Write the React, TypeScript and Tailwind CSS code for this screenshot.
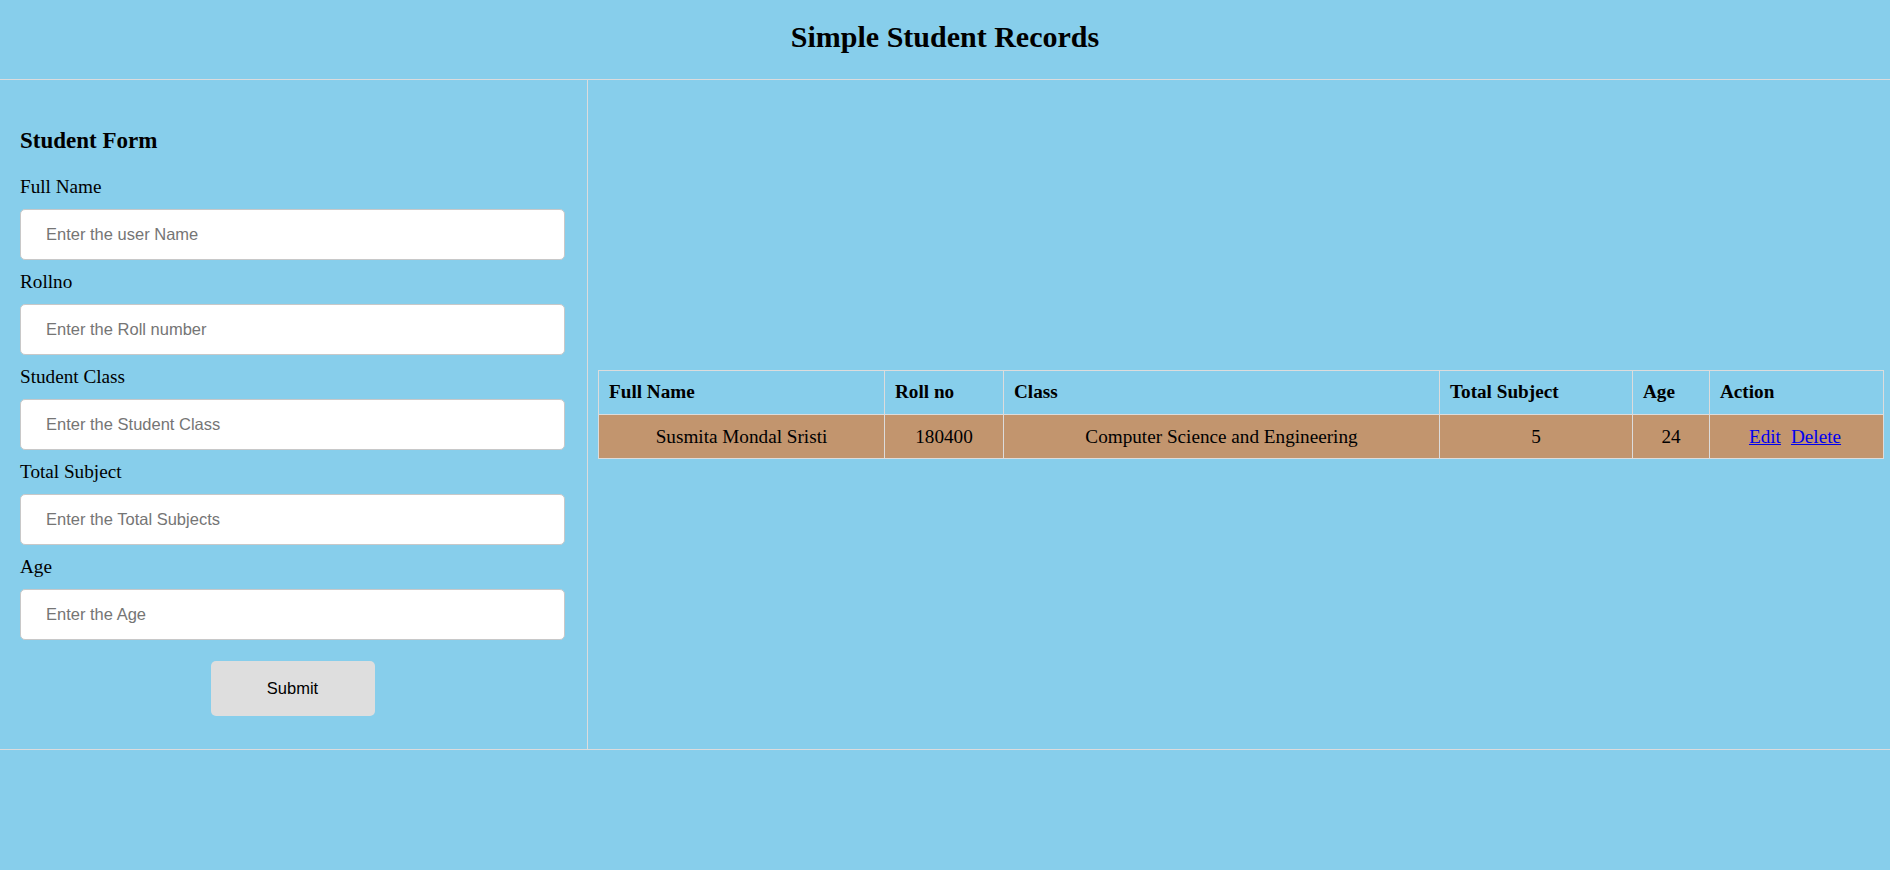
import React from "react";

const serif = { fontFamily: '"Liberation Serif", "Times New Roman", serif' };
const sans = { fontFamily: '"Liberation Sans", Arial, sans-serif' };

const fields = [
  { label: "Full Name", placeholder: "Enter the user Name" },
  { label: "Rollno", placeholder: "Enter the Roll number" },
  { label: "Student Class", placeholder: "Enter the Student Class" },
  { label: "Total Subject", placeholder: "Enter the Total Subjects" },
  { label: "Age", placeholder: "Enter the Age" },
];

const columns = [
  { title: "Full Name", width: "w-[286px]" },
  { title: "Roll no", width: "w-[119px]" },
  { title: "Class", width: "w-[436px]" },
  { title: "Total Subject", width: "w-[193px]" },
  { title: "Age", width: "w-[77px]" },
  { title: "Action", width: "" },
];

const students = [
  {
    name: "Susmita Mondal Sristi",
    roll: "180400",
    className: "Computer Science and Engineering",
    subjects: "5",
    age: "24",
  },
];

function StudentForm() {
  return (
    <form
      className="w-[588px] shrink-0 border-r border-[#dcdcdc] px-5 pt-[48px]"
      onSubmit={(e) => e.preventDefault()}
    >
      <h3 className="mb-[22px] text-[23px] font-bold leading-[26px]">Student Form</h3>
      <div className="flex flex-col gap-[11px]">
        {fields.map((f) => (
          <div key={f.label}>
            <label className="block text-[19.2px] leading-[21px]">{f.label}</label>
            <input
              type="text"
              placeholder={f.placeholder}
              className="mt-[12px] block h-[51px] w-[545px] rounded-[5px] border border-[#c8c8c8] bg-white pl-[25px] text-[16.5px] text-black outline-none placeholder:text-[#757575]"
              style={sans}
            />
          </div>
        ))}
      </div>
      <div className="mt-[21px] flex w-[545px] justify-center pb-[33px]">
        <button
          type="submit"
          className="h-[55px] w-[164px] rounded-[5px] bg-[#dedede] text-[16.5px] text-black"
          style={sans}
        >
          Submit
        </button>
      </div>
    </form>
  );
}

function StudentTable() {
  return (
    <div className="flex flex-1 items-center pl-[10px] pr-[6px]">
      <table className="w-full table-fixed border-collapse text-[19.2px]">
        <thead>
          <tr>
            {columns.map((c) => (
              <th
                key={c.title}
                className={`${c.width} h-[44px] border border-[#dcdcdc] px-[10px] text-left font-bold`}
              >
                {c.title}
              </th>
            ))}
          </tr>
        </thead>
        <tbody>
          {students.map((s) => (
            <tr key={s.roll} className="bg-[#c2956e]">
              <td className="h-[44px] border border-[#dcdcdc] pt-[2px] text-center">{s.name}</td>
              <td className="border border-[#dcdcdc] pt-[2px] text-center">{s.roll}</td>
              <td className="border border-[#dcdcdc] pt-[2px] text-center">{s.className}</td>
              <td className="border border-[#dcdcdc] pt-[2px] text-center">{s.subjects}</td>
              <td className="border border-[#dcdcdc] pt-[2px] text-center">{s.age}</td>
              <td className="border border-[#dcdcdc] pt-[2px] pr-[3px] text-center">
                <a href="#" className="text-[#0000ee] underline">
                  Edit
                </a>
                <a href="#" className="ml-[10px] text-[#0000ee] underline">
                  Delete
                </a>
              </td>
            </tr>
          ))}
        </tbody>
      </table>
    </div>
  );
}

export default function App() {
  return (
    <div className="min-h-[870px] w-full bg-[#87ceeb] text-black" style={serif}>
      <header className="h-[80px] border-b border-[#dcdcdc] pt-[20px] text-center">
        <h2 className="text-[30px] font-bold leading-[34px]">Simple Student Records</h2>
      </header>
      <main className="flex border-b border-[#dcdcdc]">
        <StudentForm />
        <StudentTable />
      </main>
    </div>
  );
}
